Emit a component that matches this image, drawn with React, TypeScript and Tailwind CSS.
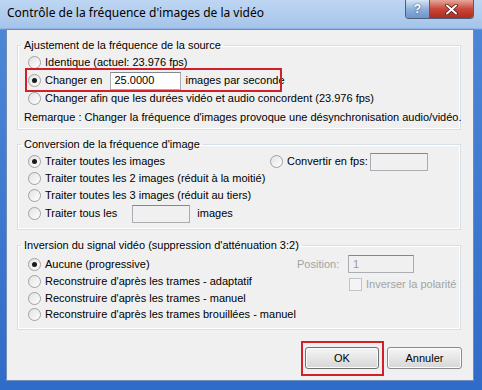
import React from "react";

const font = { fontFamily: "'Liberation Sans', Arial, sans-serif" };

type RadioProps = { checked?: boolean };

const Radio: React.FC<RadioProps> = ({ checked }) => (
  <span className="flex h-[13px] w-[13px] shrink-0 items-center justify-center rounded-full border border-[#a0a0a0] bg-[linear-gradient(135deg,#e2e2e2,#ffffff)]">
    {checked && <span className="h-[5px] w-[5px] rounded-full bg-[#1b1b1b]" />}
  </span>
);

const RadioRow: React.FC<{ label: string; checked?: boolean; className?: string }> = ({ label, checked, className }) => (
  <div className={`flex items-center gap-[4px] ${className ?? "h-[17px]"}`}>
    <Radio checked={checked} />
    <span className="whitespace-nowrap">{label}</span>
  </div>
);

const Group: React.FC<{ title: string; className?: string; children: React.ReactNode }> = ({ title, className, children }) => (
  <fieldset className={`mx-[10px] w-[444px] min-w-0 border border-[#d5dfe5] px-[10px] shadow-[inset_0_0_0_1px_#ffffff] ${className ?? ""}`}>
    <legend className="ml-[-7px] h-[14px] px-[3px] leading-[14px] whitespace-nowrap">{title}</legend>
    {children}
  </fieldset>
);

const TextBox: React.FC<{ value?: string; w: string; disabled?: boolean }> = ({ value, w, disabled }) => (
  <div
    className={`flex h-[18px] items-center border border-[#abadb3] border-t-[#828790] px-[4px] ${w} ${
      disabled ? "bg-[#f0f0f0] text-[#9c9c9c]" : "bg-white text-black"
    }`}
  >
    {value}
  </div>
);

export default function App() {
  return (
    <div
      className="flex h-[390px] w-[482px] flex-col overflow-hidden bg-[linear-gradient(to_bottom,#bed6f2_0px,#a6c4ea_28px,#4d86d6_30px,#2f6bc8_100%)] text-[11px] text-black"
      style={font}
    >
      {/* title bar */}
      <div className="flex h-[29px] shrink-0 items-start">
        <div className="mt-[5px] ml-[7px] flex-1 text-[12px] leading-[16px] text-black" style={{ fontFamily: "'Noto Sans', 'DejaVu Sans', sans-serif" }}>
          Contrôle de la fréquence d'images de la vidéo
        </div>
        <div className="mr-[8px] flex h-[19px] overflow-hidden rounded-b-[4px] border border-t-0 border-[#4a5f7c]">
          <div className="flex w-[24px] items-center justify-center border-r border-[#4a5f7c] bg-[linear-gradient(to_bottom,#d6e4f5,#8fb0dc_50%,#6e93c9)] text-[12px] font-bold leading-none text-white [text-shadow:0_0_2px_#1d3a66]">
            ?
          </div>
          <div className="flex w-[43px] items-center justify-center bg-[linear-gradient(to_bottom,#e8a79b,#c9473a_50%,#b02a1c)]">
            <svg width="13" height="11" viewBox="0 0 13 11">
              <path d="M2 1.5 L11 9.5 M11 1.5 L2 9.5" stroke="#4a1410" strokeWidth="3.4" strokeLinecap="round" />
              <path d="M2 1.5 L11 9.5 M11 1.5 L2 9.5" stroke="#ffffff" strokeWidth="2" strokeLinecap="round" />
            </svg>
          </div>
        </div>
      </div>

      {/* client area */}
      <div className="mr-[8px] mb-[9px] ml-[6px] flex flex-1 flex-col border border-[#6e8db8] bg-[#f0f0f0]">
        <Group title="Ajustement de la fréquence de la source" className="mt-[8px] pb-[3px]">
          <RadioRow label="Identique (actuel: 23.976 fps)" className="mt-[2px] h-[17px]" />
          <div className="relative flex h-[19px] items-center">
            <div className="flex items-center gap-[4px]">
              <Radio checked />
              <span>Changer en</span>
            </div>
            <div className="ml-[7px]">
              <TextBox value="25.0000" w="w-[71px]" />
            </div>
            <span className="ml-[5px]">images par seconde</span>
            <div className="pointer-events-none absolute top-[-3px] left-[-3px] h-[24px] w-[257px] border-2 border-[#d21f2a]" />
          </div>
          <RadioRow label="Changer afin que les durées vidéo et audio concordent  (23.976 fps)" />
          <div className="mt-[2px] ml-[-4px] flex h-[17px] items-center whitespace-nowrap">
            Remarque : Changer la fréquence d'images provoque une désynchronisation audio/vidéo.
          </div>
        </Group>

        <Group title="Conversion de la fréquence d'image" className="mt-[7px] pb-[6px]">
          <div className="mt-[2px] flex h-[17px] items-center">
            <div className="w-[242px]">
              <RadioRow label="Traiter toutes les images" checked />
            </div>
            <RadioRow label="Convertir en fps:" />
            <div className="ml-[2px]">
              <TextBox w="w-[58px]" disabled />
            </div>
          </div>
          <RadioRow label="Traiter toutes les 2 images (réduit à la moitié)" />
          <RadioRow label="Traiter toutes les 3 images (réduit au tiers)" />
          <div className="flex h-[19px] items-center">
            <RadioRow label="Traiter tous les" />
            <div className="ml-[15px]">
              <TextBox w="w-[58px]" disabled />
            </div>
            <span className="ml-[7px]">images</span>
          </div>
        </Group>

        <Group title="Inversion du signal vidéo (suppression d'atténuation 3:2)" className="mt-[8px] pb-[7px]">
          <div className="flex">
            <div className="mt-[4px] w-[269px] shrink-0">
              <RadioRow label="Aucune (progressive)" checked />
              <RadioRow label="Reconstruire d'après les trames - adaptatif" />
              <RadioRow label="Reconstruire d'après les trames - manuel" className="h-[16px]" />
              <RadioRow label="Reconstruire d'après les trames brouillées - manuel" className="h-[16px]" />
            </div>
            <div className="mt-[3px] flex flex-col text-[#a3a3a3]">
              <div className="flex h-[18px] items-center">
                <span className="w-[51px]">Position:</span>
                <TextBox value="1" w="w-[66px]" disabled />
              </div>
              <div className="mt-[3px] ml-[52px] flex h-[17px] items-center gap-[4px]">
                <span className="h-[13px] w-[13px] border border-[#c4c4c4] bg-[#f4f4f4]" />
                <span className="whitespace-nowrap">Inverser la polarité</span>
              </div>
            </div>
          </div>
        </Group>

        <div className="mt-[17px] mr-[11px] flex justify-end gap-[8px]">
          <div className="relative">
            <button className="flex h-[22px] w-[74px] items-center justify-center rounded-[3px] border border-[#707070] bg-[linear-gradient(to_bottom,#f6f6f6,#e6e6e6_50%,#d6d6d6)] shadow-[inset_0_0_0_1px_#fcfcfc]">
              OK
            </button>
            <div className="pointer-events-none absolute top-[-6px] left-[-4px] h-[35px] w-[83px] border-2 border-[#d21f2a]" />
          </div>
          <button className="flex h-[22px] w-[75px] items-center justify-center rounded-[3px] border border-[#8a8a8a] bg-[linear-gradient(to_bottom,#f6f6f6,#e6e6e6_50%,#d6d6d6)] shadow-[inset_0_0_0_1px_#fcfcfc]">
            Annuler
          </button>
        </div>
      </div>
    </div>
  );
}
